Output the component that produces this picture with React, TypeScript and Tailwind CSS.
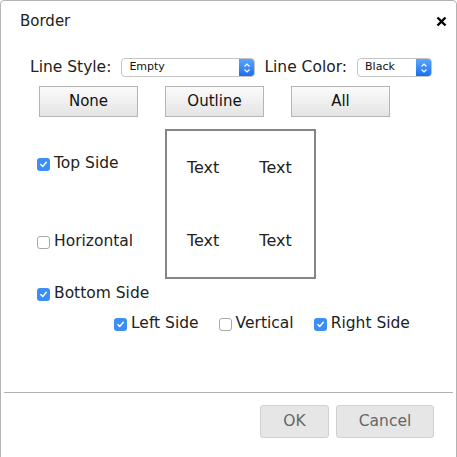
import React from 'react'

const font = { fontFamily: '"DejaVu Sans", Verdana, sans-serif' }

const Check = ({ on }: { on: boolean }) =>
  on ? (
    <span className="flex h-[13px] w-[13px] items-center justify-center rounded-[3px] bg-[#3a8ef5]">
      <svg width="9" height="9" viewBox="0 0 9 9">
        <path d="M1.8 4.6 L3.7 6.5 L7.3 2.2" fill="none" stroke="white" strokeWidth="1.4" strokeLinecap="round" strokeLinejoin="round" />
      </svg>
    </span>
  ) : (
    <span className="block h-[13px] w-[13px] rounded-[3px] border border-[#a8a8a8] bg-white" />
  )

const Option = ({ on, label, className = '' }: { on: boolean; label: string; className?: string }) => (
  <label className={`flex h-[22px] items-center gap-[4px] text-[15.5px] text-[#222] ${className}`}>
    <Check on={on} />
    <span>{label}</span>
  </label>
)

const Select = ({ value, width }: { value: string; width: string }) => (
  <div className={`flex h-[19px] ${width} items-center overflow-hidden rounded-[4px] border border-[#c4c4c4] bg-white`}>
    <span className="flex-1 pl-[7px] text-[11px] text-[#111]">{value}</span>
    <span className="flex h-full w-[15px] items-center justify-center bg-gradient-to-b from-[#5aa6fb] to-[#1a6ff0]">
      <svg width="8" height="12" viewBox="0 0 8 12">
        <path d="M1.5 4.5 L4 2 L6.5 4.5 M1.5 7.5 L4 10 L6.5 7.5" fill="none" stroke="white" strokeWidth="1.2" />
      </svg>
    </span>
  </div>
)

const GrayBtn = ({ label }: { label: string }) => (
  <button className="h-[31px] w-[99px] border border-[#b5b5b5] bg-gradient-to-b from-[#fbfbfb] to-[#e4e4e4] text-[15px] text-[#111]">
    {label}
  </button>
)

export default function App() {
  return (
    <div style={font} className="h-[457px] w-[457px] overflow-hidden bg-white">
      <div className="h-[470px] w-[457px] rounded-tl-[4px] rounded-tr-[4px] border border-[#b3b3b3] bg-white">
        <div className="flex h-[40px] items-center justify-between pl-[19px] pr-[9px]">
          <span className="text-[15px] text-[#222]">Border</span>
          <svg width="11" height="11" viewBox="0 0 11 11">
            <path d="M1.5 1.5 L9.5 9.5 M9.5 1.5 L1.5 9.5" stroke="#000" strokeWidth="2.4" />
          </svg>
        </div>

        <div className="mt-[17px] flex h-[19px] items-center pl-[29px] text-[15.5px] text-[#222]">
          <span>Line Style:</span>
          <div className="ml-[10px]">
            <Select value="Empty" width="w-[134px]" />
          </div>
          <span className="ml-[9px]">Line Color:</span>
          <div className="ml-[10px]">
            <Select value="Black" width="w-[75px]" />
          </div>
        </div>

        <div className="mt-[9px] flex gap-[27px] pl-[38px]">
          <GrayBtn label="None" />
          <GrayBtn label="Outline" />
          <GrayBtn label="All" />
        </div>

        <div className="mt-[12px] flex">
          <div className="flex w-[164px] flex-col pl-[36px]">
            <Option on label="Top Side" className="mt-[24px]" />
            <Option on={false} label="Horizontal" className="mt-[56px]" />
          </div>
          <div className="flex h-[150px] w-[151px] flex-col gap-[51px] border-2 border-[#858585] pl-[20px] pt-[26px] text-[16px] text-[#222]">
            <div className="flex h-[22px] items-center gap-[40px]">
              <span>Text</span>
              <span>Text</span>
            </div>
            <div className="flex h-[22px] items-center gap-[40px]">
              <span>Text</span>
              <span>Text</span>
            </div>
          </div>
        </div>

        <Option on label="Bottom Side" className="mt-[4px] pl-[36px]" />

        <div className="mt-[8px] flex pl-[113px]">
          <Option on label="Left Side" />
          <Option on={false} label="Vertical" className="ml-[20px]" />
          <Option on label="Right Side" className="ml-[20px]" />
        </div>

        <div className="mx-[3px] mt-[57px] h-px bg-[#b0b0b0]" />

        <div className="mt-[12px] flex justify-end gap-[7px] pr-[22px]">
          <button className="h-[33px] w-[69px] rounded-[3px] border border-[#d0d0d0] bg-[#e6e6e6] text-[15.5px] text-[#666]">OK</button>
          <button className="h-[33px] w-[98px] rounded-[3px] border border-[#d0d0d0] bg-[#e6e6e6] text-[15.5px] text-[#666]">Cancel</button>
        </div>
      </div>
    </div>
  )
}
